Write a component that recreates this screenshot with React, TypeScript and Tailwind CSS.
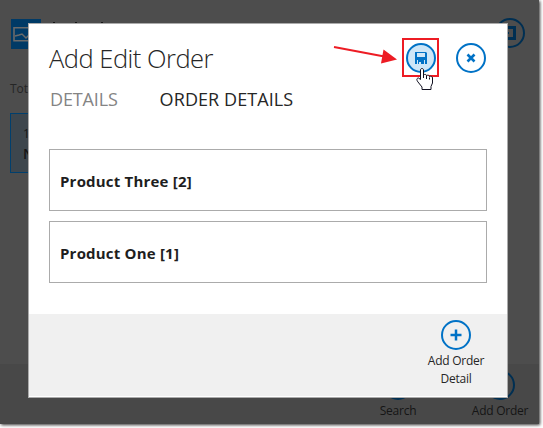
import type { ReactNode } from "react";

function RoundButton({ fill = "none", color = "#0072c6", children }: { fill?: string; color?: string; children?: ReactNode }) {
  return (
    <svg className="block size-[30px] shrink-0" viewBox="0 0 30 30" fill="none">
      <circle cx="15" cy="15" r="14" fill={fill} stroke={color} strokeWidth="2" />
      {children}
    </svg>
  );
}

function Backdrop() {
  return (
    <div className="flex h-[424px] w-[539px] flex-col bg-[#4d4d4d] shadow-[1px_1px_3px_#333]">
      <header className="flex h-[49px] items-start pt-[19px] pl-[11px]">
        <svg className="size-[30px]" viewBox="0 0 30 30" fill="none">
          <path d="M0 0h30v30H0z" fill="#003a66" />
          <path d="M3 8.700h24v13H3z" stroke="#6a6a6a" strokeWidth="1.600" />
          <path d="M4 17l4-1 3-1 4 4 3-3 3 1 5-2" stroke="#6a6a6a" strokeWidth="1.500" />
        </svg>
        <svg className="mt-[3px] ml-[11px] h-px w-[52px]" viewBox="0 0 52 1" fill="#151515">
          <path d="M1 0h2v1H1zM23 0h2v1h-2zM49 0h2v1h-2z" />
        </svg>
        <div className="-mt-px mr-[14px] ml-auto">
          <RoundButton color="#002f52">
            <path d="M9 9.500h10.500v11H9z" stroke="#002f52" strokeWidth="3" />
            <path d="M12 15h2" stroke="#002f52" strokeWidth="2" />
          </RoundButton>
        </div>
      </header>
      <main className="flex-1 pt-[31px] pl-[10px]">
        <div className="text-[12px] leading-[18px] text-[#252525]">Tot</div>
        <div className="mt-[15px] h-[60px] w-[200px] border border-[#003f6d] bg-[#3d464d] pt-[10px] pl-[12px] text-[12px] leading-[20px] text-[#151515]">
          <div>1</div>
          <div className="text-[14px] font-semibold">N</div>
        </div>
      </main>
      <footer className="flex h-[60px] justify-end bg-[#484848] pt-[6px] text-[12px] leading-[18px] tracking-[-0.250px] text-[#151515]">
        <div className="flex w-[100px] flex-col items-center"><RoundButton color="#002f52" /><span className="mt-[2px]">Search</span></div>
        <div className="-mr-[12px] ml-px flex w-[102px] flex-col items-center"><RoundButton color="#002f52" /><span className="mt-[2px]">Add Order</span></div>
      </footer>
    </div>
  );
}

function Item({ name }: { name: string }) {
  return (
    <div className="flex h-[62px] items-center border border-[#ababab] pt-[2px] pl-[10px] text-[15px] font-bold tracking-[0.200px] text-[#1e1e1e]">{name}</div>
  );
}

function Dialog() {
  return (
    <section className="absolute top-[23px] left-[28px] flex h-[375px] w-[480px] flex-col border border-[#ababab] bg-white pb-px">
      <div className="flex h-[61px] items-start pt-[19px] pr-[21px] pl-[20px]">
        <h1 className="flex-1 text-[25.500px] leading-[30px] font-light tracking-[-0.500px] text-[#262626]">Add Edit Order</h1>
        <RoundButton fill="#cde6f7">
          <path d="M9 9h11l1 1v11H9z" fill="#0072c6" />
          <path d="M11 10h8v4h-8zM11 17h8v4h-8z" fill="#cde6f7" />
          <path d="M12 17h6v4h-3v-2h-2v2h-1z" fill="#0072c6" />
        </RoundButton>
        <div className="ml-[20px]">
          <RoundButton><path d="M11.500 11.500l7 7m0-7l-7 7" stroke="#0072c6" strokeWidth="2.600" /></RoundButton>
        </div>
      </div>
      <nav className="flex h-[64px] items-start gap-[42px] pt-[2px] pl-[21px] text-[18px] leading-[24px]">
        <span className="tracking-[-0.150px] text-[#848484]">DETAILS</span>
        <span className="tracking-[0.080px] text-[#262626]">ORDER DETAILS</span>
      </nav>
      <div className="flex flex-1 flex-col gap-[10px] px-[20px]">
        <Item name="Product Three [2]" />
        <Item name="Product One [1]" />
      </div>
      <footer className="flex h-[82px] justify-end bg-[#f0f0f0] pt-[6px] pr-[16px]">
        <div className="flex w-[70px] flex-col items-center text-center text-[12px] leading-[18px] tracking-[-0.250px] text-[#262626]">
          <RoundButton><path d="M15 9.500v11M9.500 15h11" stroke="#0072c6" strokeWidth="2.500" /></RoundButton>
          <span className="mt-[2px]">Add Order<br />Detail</span>
        </div>
      </footer>
    </section>
  );
}

function Callout() {
  return (
    <svg className="absolute top-[36px] left-[330px] h-[56px] w-[112px]" viewBox="330 36 112 56" fill="none">
      <path d="M334 47L383 56.300" stroke="#ed1c24" strokeWidth="2" />
      <path d="M383.500 49.500L397 59.500L381 63.500z" fill="#ed1c24" />
      <path d="M403 39h35v37h-35z" stroke="#ed1c24" strokeWidth="2" />
      <path d="M420.500 70c0-2 3-2 3 0v5c1-1 3-.8 3 .7 1-1 3-.5 3 1 1-1 3-.3 3 1.300v5l-1.500 3.500v3h-9v-2.500l-4-5c-2-2.500-1-4 .5-4l2 1.500z" fill="#fff" stroke="#101020" />
      <path d="M423.500 75v3m3-2v3m3-1.500v2" stroke="#101020" />
    </svg>
  );
}

export default function App() {
  return (
    <div className="relative h-[428px] w-[543px] overflow-hidden bg-white font-['Open_Sans','Noto_Sans',sans-serif]">
      <Backdrop />
      <Dialog />
      <Callout />
    </div>
  );
}
